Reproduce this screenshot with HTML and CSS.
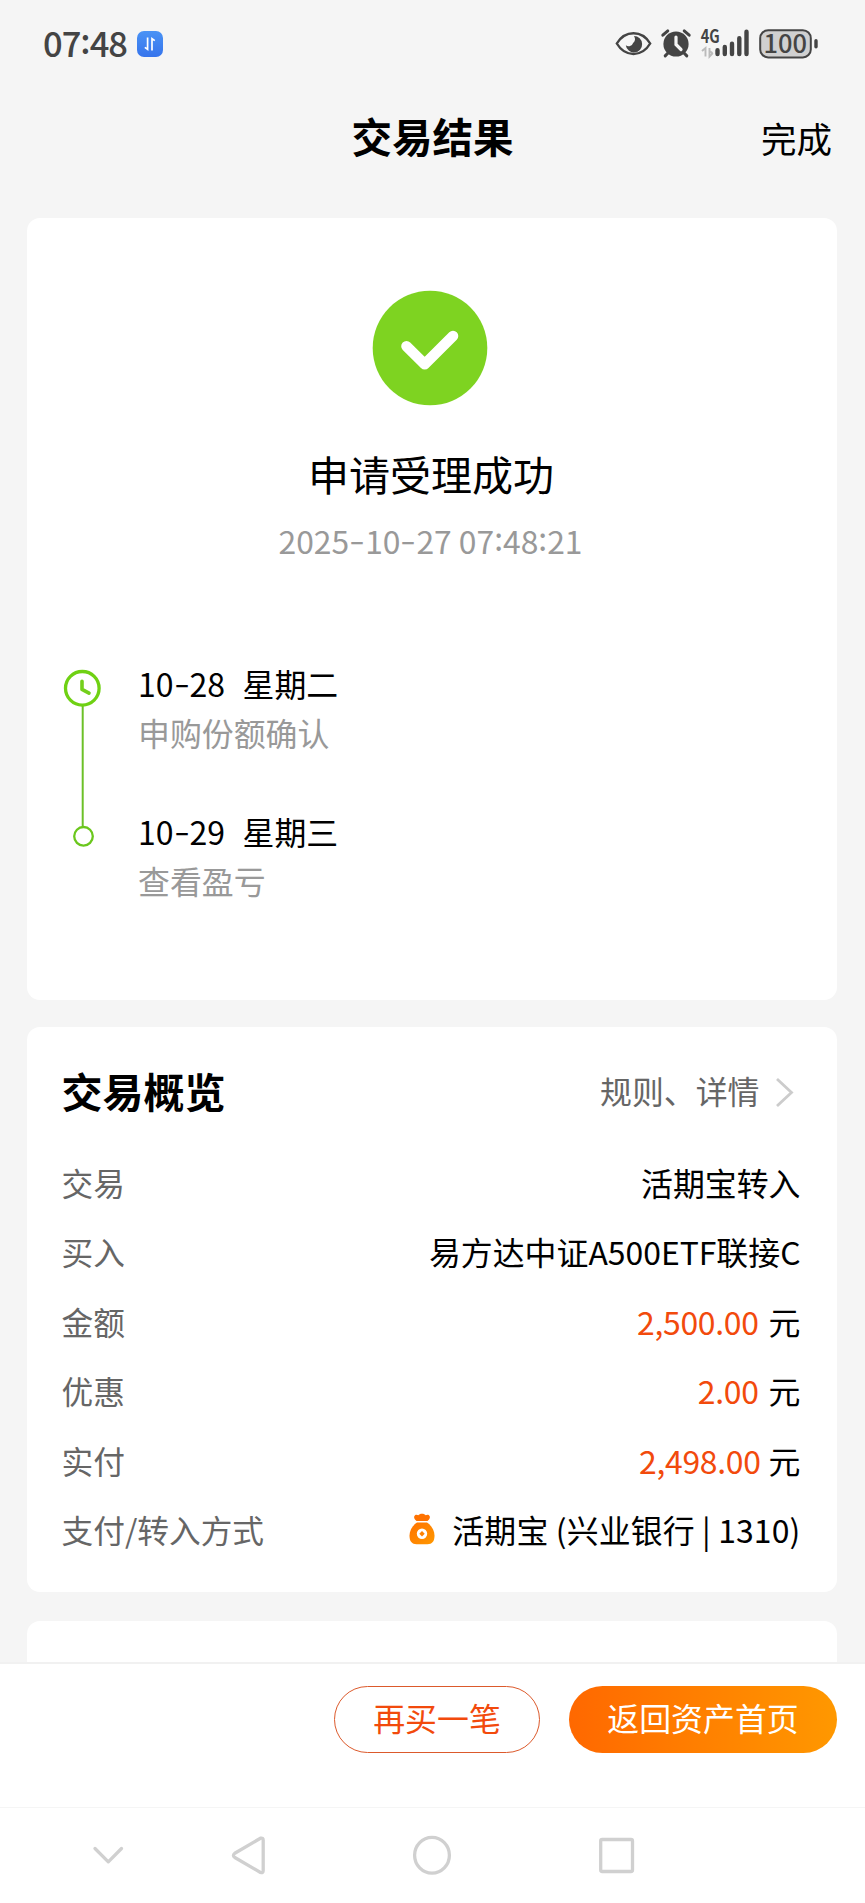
FILE: index.html
```html
<!DOCTYPE html>
<html lang="zh-CN">
<head>
<meta charset="utf-8">
<title>交易结果</title>
<link rel="stylesheet" href="styles.css">
</head>
<body>
<div class="screen">
  <header class="status">
    <span class="clock">07<span class="colon">:</span>48</span>
    <svg class="badge" width="28" height="28" viewBox="0 0 28 28">
      <defs><linearGradient id="blue" x1="0" y1="0" x2="0" y2="1"><stop offset="0" stop-color="#4a93f5"/><stop offset="1" stop-color="#3674ec"/></linearGradient></defs>
      <rect x="1" y="1" width="26" height="26" rx="7" fill="url(#blue)"/>
      <path d="M11.600 7.500V19.300L8.800 17.400M16 20.500V8.700l2.800 1.900" fill="none" stroke="#fff" stroke-width="1.700"/>
    </svg>
    <svg class="indicators" width="204" height="56" viewBox="0 -12 204 56">
      <path d="M1.800 15.500C6 8.500 12 5.200 18.500 5.200S31 8.500 35.200 15.500C31 22.500 25 26 18.500 26S6 22.500 1.800 15.500Z" fill="none" stroke="#444" stroke-width="2.400"/>
      <path d="M19 8a8.200 8.200 0 1 1-8.200 9.200 4.600 4.600 0 0 0 7.300-2.200 5.500 5.500 0 0 0 .9-7Z" fill="#444"/>
      <circle cx="61" cy="16" r="12.600" fill="#444"/>
      <path d="M47.800 7.200l5-4.300M74.200 7.200l-5-4.300M53 25l-2.800 2.900M69 25l2.800 2.900" stroke="#444" stroke-width="3" stroke-linecap="round"/>
      <path d="M61 9v7.500l5 5" fill="none" stroke="#f5f5f5" stroke-width="3.200" stroke-linecap="round"/>
      <text x="85.800" y="14.500" class="net" textLength="19" lengthAdjust="spacingAndGlyphs">4G</text>
      <path d="M90.500 28.500v-8.500l-3.500 3M94.500 20v8.500l3.300-3.500M94.500 23l3 2" stroke="#bbb" stroke-width="1.900" fill="none"/>
      <path d="M102.500 22.200v3.800M109.800 19v7M117 15.700v10.300M124.300 10.300v15.700M131.500 3.700v22.300" stroke="#444" stroke-width="4.400" stroke-linecap="round"/>
      <rect x="145.200" y="2.200" width="50.600" height="27.200" rx="8" fill="#d0d0d0" stroke="#444" stroke-width="2"/>
      <path d="M201 12.700v6" stroke="#444" stroke-width="3.400" stroke-linecap="round"/>
      <text x="148.500" y="25" class="battery" textLength="43.500" lengthAdjust="spacingAndGlyphs">100</text>
    </svg>
  </header>

  <div class="titlebar">
    <h1 class="title">交易结果</h1>
    <a class="done">完成</a>
  </div>

  <main class="content">
    <section class="card result">
      <svg class="check" width="116" height="116" viewBox="0 0 116 116">
        <circle cx="58" cy="58" r="57.300" fill="#7ed321"/>
        <path d="M34.500 56.300L52.700 74.200L81 46" fill="none" stroke="#fff" stroke-width="10.600" stroke-linecap="round" stroke-linejoin="round"/>
      </svg>
      <h2 class="headline">申请受理成功</h2>
      <p class="time">2025<span class="dash">-</span>10<span class="dash">-</span>27 07<span class="colon">:</span>48<span class="colon">:</span>21</p>
      <div class="timeline">
        <svg class="track" width="40" height="180" viewBox="0 0 40 180">
          <path d="M20.700 37v121" stroke="#6cc028" stroke-width="2"/>
          <circle cx="20.300" cy="19.300" r="16.800" fill="#fff" stroke="#6fd113" stroke-width="3.300"/>
          <path d="M20 12.200v8.200l7 3.800" fill="none" stroke="#74cf1c" stroke-width="3.600" stroke-linecap="round" stroke-linejoin="round"/>
          <circle cx="21.500" cy="167.300" r="9.300" fill="#fff" stroke="#6bc71d" stroke-width="2.300"/>
        </svg>
        <div class="steps">
          <div class="step">
            <div class="when"><span class="day">10<span class="dash">-</span>28</span><span>星期二</span></div>
            <div class="what">申购份额确认</div>
          </div>
          <div class="step">
            <div class="when"><span class="day">10<span class="dash">-</span>29</span><span>星期三</span></div>
            <div class="what">查看盈亏</div>
          </div>
        </div>
      </div>
    </section>

    <section class="card overview">
      <div class="overview-head">
        <h2 class="section-title">交易概览</h2>
        <a class="more">规则、详情
          <svg class="chevron" width="20" height="32" viewBox="0 0 20 32"><path d="M2 3L16.500 16.500L2 30" fill="none" stroke="#ccc" stroke-width="2.800"/></svg>
        </a>
      </div>
      <div class="row"><span class="label">交易</span><span class="value">活期宝转入</span></div>
      <div class="row"><span class="label">买入</span><span class="value">易方达中证A500ETF联接C</span></div>
      <div class="row"><span class="label">金额</span><span class="value"><span class="amount">2,500.00</span>元</span></div>
      <div class="row"><span class="label">优惠</span><span class="value"><span class="amount">2.00</span>元</span></div>
      <div class="row"><span class="label">实付</span><span class="value"><span class="amount paid">2,498.00</span>元</span></div>
      <div class="row"><span class="label">支付/转入方式</span>
        <span class="value pay">
          <svg class="bag" width="26" height="32" viewBox="0 0 26 32">
            <defs><linearGradient id="gold" x1="0" y1="0" x2="1" y2="1"><stop offset="0" stop-color="#ff7200"/><stop offset="1" stop-color="#ff9800"/></linearGradient></defs>
            <path d="M7.500 8C5 6 4.300 4 6 2.300c1.300-1 2.400-.4 3.300 0C10.500.2 15.500.2 16.700 2.300c.9-.4 2-1 3.300 0C21.700 4 21 6 18.500 8Z" fill="#ff7200"/>
            <path d="M8 9.600h10c4.500 2.600 7.500 8 7.500 13 0 6-2.500 8.700-7 8.700h-11C3 31.300.5 28.600.5 22.600c0-5 3-10.400 7.500-13Z" fill="url(#gold)"/>
            <circle cx="13" cy="20.700" r="5.200" fill="#fff"/>
            <path d="M13 18l2.700 2.700L13 23.400l-2.700-2.700Z" fill="#ff8200"/>
          </svg>
          <span class="account">活期宝 (兴业银行 | 1310)</span>
        </span>
      </div>
    </section>

    <section class="card next"></section>
  </main>

  <footer class="actions">
    <a class="btn outline">再买一笔</a>
    <a class="btn solid">返回资产首页</a>
  </footer>

  <nav class="navbar">
    <svg width="865" height="95" viewBox="0 0 865 95" fill="none" stroke="#d0d0d0" stroke-width="3.300" stroke-linecap="round" stroke-linejoin="round">
      <path d="M95 40.500L108.300 53.800L121.500 40.500"/>
      <path d="M234.800 45.200L260.500 30.200Q263.200 29.500 263.200 32.200V62.500Q263.200 65.200 260.500 64.500L234.800 49.500Q232 47.400 234.800 45.200Z"/>
      <ellipse cx="432" cy="47.300" rx="17.400" ry="17.900"/>
      <rect x="600.700" y="31.500" width="31.800" height="32" rx="1.500"/>
    </svg>
  </nav>
</div>
</body>
</html>
```

FILE: styles.css
```css
* { box-sizing: border-box; }
body {
  margin: 0;
  background: #f5f5f5;
  color: #000;
  font-family: "Noto Sans CJK SC", sans-serif;
  font-size: 31.9px;
}
h1, h2, p { margin: 0; }
.screen {
  display: flex;
  flex-direction: column;
  width: 865px;
  height: 1903px;
  overflow: hidden;
}

/* status bar */
.status {
  display: flex;
  align-items: center;
  height: 88px;
  padding: 0 46px 0 43px;
  color: #444;
}
.clock {
  flex: none;
  font-size: 34.5px;
  font-weight: 500;
  line-height: 50px;
  width: 93px;
  margin-top: -4px;
  letter-spacing: -1px;
}
.badge { flex: none; margin-top: -1px; }
.indicators { flex: none; margin-left: auto; }
.net { font-size: 18px; font-weight: 700; fill: #444; }
.battery { font-size: 25px; font-weight: 500; fill: #444; }
.colon { position: relative; top: -3px; }
.dash {
  display: inline-block;
  width: 16px;
  text-align: center;
  transform: translateY(-2px) scaleX(1.4);
}

/* title bar */
.titlebar {
  display: grid;
  grid-template-columns: 1fr auto 1fr;
  align-items: center;
  height: 130px;
  padding: 0 33px 34px;
}
.title {
  grid-column: 2;
  font-size: 40.5px;
  font-weight: 700;
  line-height: 60px;
}
.done {
  justify-self: end;
  font-size: 35.5px;
  line-height: 50px;
  margin-top: 3px;
}

/* cards */
.content {
  flex: 1;
  min-height: 0;
  overflow: hidden;
  padding: 0 28px 0 27px;
}
.card { background: #fff; border-radius: 13px; }
.result {
  display: flex;
  flex-direction: column;
  align-items: center;
  height: 782px;
  padding-top: 72px;
}
.check { flex: none; margin-right: 4px; }
.headline {
  font-size: 41px;
  font-weight: 400;
  line-height: 60px;
  margin-top: 37px;
  margin-right: 2px;
}
.time {
  color: #999;
  font-size: 31.8px;
  line-height: 44px;
  margin-top: 15px;
  margin-right: 3px;
}
.timeline {
  display: flex;
  align-self: stretch;
  padding-left: 35px;
  margin-top: 107px;
}
.track { flex: none; margin-right: 36px; }
.steps { margin-top: -10px; }
.step { height: 147.700px; }
.when {
  display: flex;
  height: 49px;
  line-height: 48px;
}
.day { width: 104.500px; font-size: 32px; }
.what { color: #999; line-height: 48px; }

.overview {
  height: 565px;
  margin-top: 27px;
  padding: 32px 36.500px 0 34.500px;
}
.overview-head {
  display: flex;
  justify-content: space-between;
  align-items: center;
  height: 62px;
  margin-bottom: 26px;
}
.section-title { font-size: 41px; font-weight: 700; line-height: 60px; }
.more {
  display: flex;
  align-items: center;
  color: #666;
  line-height: 48px;
  padding-right: 6px;
}
.chevron { margin: 4px 0 0 15px; }
.row {
  display: flex;
  justify-content: space-between;
  align-items: center;
  height: 69.500px;
  line-height: 48px;
}
.label { color: #666; font-size: 31.700px; }
.value { display: flex; align-items: center; }
.amount {
  color: #f24a0c;
  letter-spacing: -0.3px;
  margin-right: 10px;
}
.amount.paid { margin-right: 8px; }
.account { letter-spacing: 0.15px; }
.bag { margin-right: 17px; }

.next { height: 100px; margin-top: 29px; }

/* bottom actions */
.actions {
  display: flex;
  justify-content: flex-end;
  align-items: flex-start;
  gap: 29px;
  height: 145px;
  padding: 22px 28px 0 0;
  background: #fff;
  border-top: 2px solid #f1f1f1;
}
.btn {
  height: 67px;
  line-height: 61px;
  border-radius: 34px;
  text-align: center;
}
.outline { width: 206px; border: 1px solid #dc5a2c; color: #f24a0c; }
.solid {
  width: 268px;
  line-height: 63px;
  color: #fff;
  background: linear-gradient(90deg, #ff6800, #ff9800);
}

.navbar { height: 96px; background: #fff; border-top: 1px solid #f5f5f5; }
.navbar svg { display: block; }
```
